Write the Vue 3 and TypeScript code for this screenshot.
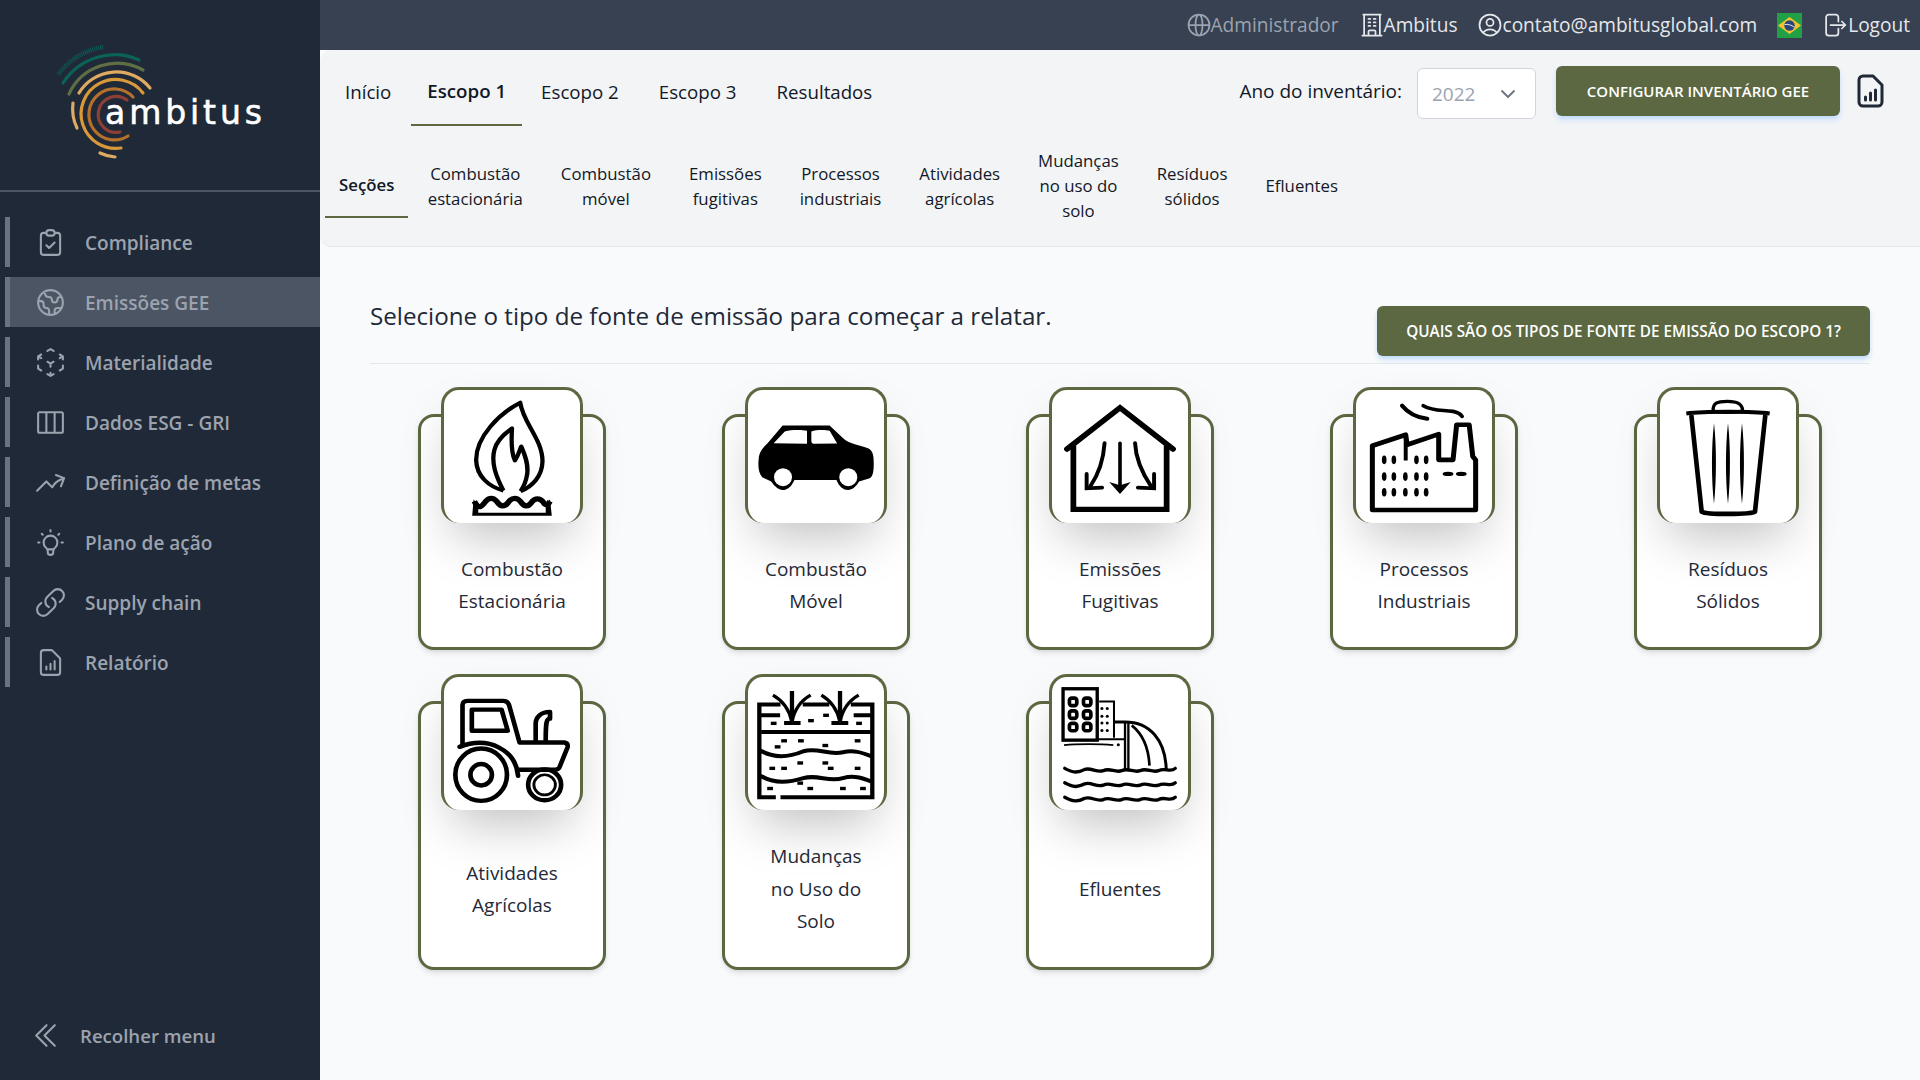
<script setup lang="ts">
interface NavItem { label: string; d: string; active?: boolean }
interface Card { lines: string[]; vb: string; art: string }

const nav: NavItem[] = [
  { label: 'Compliance', d: 'M9 5H7a2 2 0 00-2 2v12a2 2 0 002 2h10a2 2 0 002-2V7a2 2 0 00-2-2h-2M9 5a2 2 0 002 2h2a2 2 0 002-2M9 5a2 2 0 012-2h2a2 2 0 012 2m-6 9l2 2 4-4' },
  { label: 'Emissões GEE', active: true, d: 'M3.055 11H5a2 2 0 012 2v1a2 2 0 002 2 2 2 0 012 2v2.945M8 3.935V5.5A2.5 2.5 0 0010.5 8h.5a2 2 0 012 2 2 2 0 104 0 2 2 0 012-2h1.064M15 20.488V18a2 2 0 012-2h3.064M21 12a9 9 0 11-18 0 9 9 0 0118 0z' },
  { label: 'Materialidade', d: 'M21 7.5l-2.25-1.313M21 7.5v2.25m0-2.25l-2.25 1.313M3 7.5l2.25-1.313M3 7.5l2.25 1.313M3 7.5v2.25m9 3l2.25-1.313M12 12.75l-2.25-1.313M12 12.75V15m0 6.75l2.25-1.313M12 21.75V19.5m0 2.25l-2.25-1.313m0-16.875L12 2.25l2.25 1.313M21 14.25v2.25l-2.25 1.313m-13.5 0L3 16.5v-2.25' },
  { label: 'Dados ESG - GRI', d: 'M9 4.5v15m6-15v15m-10.875 0h15.75c.621 0 1.125-.504 1.125-1.125V5.625c0-.621-.504-1.125-1.125-1.125H4.125C3.504 4.5 3 5.004 3 5.625v12.75c0 .621.504 1.125 1.125 1.125z' },
  { label: 'Definição de metas', d: 'M2.25 18L9 11.25l4.306 4.307a11.95 11.95 0 015.814-5.519l2.74-1.22m0 0l-5.94-2.28m5.94 2.28l-2.28 5.941' },
  { label: 'Plano de ação', d: 'M9.663 17h4.673M12 3v1m6.364 1.636l-.707.707M21 12h-1M4 12H3m3.343-5.657l-.707-.707m2.828 9.9a5 5 0 117.072 0l-.548.547A3.374 3.374 0 0014 18.469V19a2 2 0 11-4 0v-.531c0-.895-.356-1.754-.988-2.386l-.548-.547z' },
  { label: 'Supply chain', d: 'M13.19 8.688a4.5 4.5 0 011.242 7.244l-4.5 4.5a4.5 4.5 0 01-6.364-6.364l1.757-1.757m13.35-.622l1.757-1.757a4.5 4.5 0 00-6.364-6.364l-4.5 4.5a4.5 4.5 0 001.242 7.244' },
  { label: 'Relatório', d: 'M9 17v-2m3 2v-4m3 4v-6m2 10H7a2 2 0 01-2-2V5a2 2 0 012-2h5.586a1 1 0 01.707.293l5.414 5.414a1 1 0 01.293.707V19a2 2 0 01-2 2z' }
]

const tabs: string[] = ['Início', 'Escopo 1', 'Escopo 2', 'Escopo 3', 'Resultados']

const sections: string[][] = [
  ['Seções'],
  ['Combustão', 'estacionária'],
  ['Combustão', 'móvel'],
  ['Emissões', 'fugitivas'],
  ['Processos', 'industriais'],
  ['Atividades', 'agrícolas'],
  ['Mudanças', 'no uso do', 'solo'],
  ['Resíduos', 'sólidos'],
  ['Efluentes']
]

const dots = (list: number[][], rx: number, ry: number): string =>
  list.map(([x, y]) => `<ellipse cx="${x}" cy="${y}" rx="${rx}" ry="${ry}" fill="#000"/>`).join('')

const bricks = (list: number[][]): string =>
  list.map(([x, y]) => `<rect x="${x}" y="${y}" width="16" height="10" fill="#000"/>`).join('')

const cards: Card[] = [
  {
    lines: ['Combustão', 'Estacionária'],
    vb: '124.4 61 379.2 398',
    art: `<g fill="none" stroke="#000" stroke-width="12" stroke-linejoin="round">
      <path d="M290 362C250 350 215 320 214 270C214 200 280 130 337 99C345 160 400 210 399 275C398 320 370 350 338 364"/>
      <path d="M290 362C270 320 255 280 265 240C272 210 295 190 314 176C312 210 312 250 322 272C332 258 335 240 340 230C352 260 362 290 355 320C352 340 345 352 338 364"/>
      <path stroke-width="16" d="M209 394C220 420 230 410 240 395C250 382 262 382 272 395C282 412 295 412 305 395C315 382 328 382 338 395C348 412 360 412 370 395C378 384 392 384 400 395C405 405 412 410 420 394"/></g>
      <path d="M203 437L207 388L220 408V428H408V408L420 388L425 437Z" fill="#000"/>`
  },
  {
    lines: ['Combustão', 'Móvel'],
    vb: '975.4 61 379.2 398',
    art: `<path fill="#000" d="M1005 270C1005 250 1015 235 1030 220L1072 167H1203L1240 205C1255 222 1290 228 1310 235C1325 242 1326 260 1326 280C1326 300 1325 318 1315 325L1285 335C1275 355 1262 360 1255 360C1240 360 1230 350 1222 330H1105C1095 352 1085 360 1072 360C1060 360 1050 350 1040 335L1015 322C1005 310 1003 290 1005 270Z"/>
      <path fill="#fff" d="M1047 220L1078 185C1095 180 1125 180 1140 183V222ZM1152 185C1165 180 1190 180 1203 183L1224 221L1160 222C1152 222 1152 215 1152 210Z"/>
      <ellipse cx="1073" cy="322" rx="25" ry="27" fill="#fff"/><ellipse cx="1255" cy="322" rx="25" ry="27" fill="#fff"/>`
  },
  {
    lines: ['Emissões', 'Fugitivas'],
    vb: '118.4 61 379.2 398',
    art: `<g fill="none" stroke="#000" stroke-linecap="round">
      <path d="M160 238L308 114L456 238" stroke-width="16"/>
      <path d="M178 228V418H438V228" stroke-width="16" stroke-linecap="butt"/>
      <path d="M308 220V350" stroke-width="10"/>
      <path d="M265 220C262 270 250 310 225 350" stroke-width="11"/>
      <path d="M350 220C352 270 370 310 395 350" stroke-width="11"/>
      <path d="M215 312V355L258 353" stroke-width="11"/>
      <path d="M403 312V355L358 353" stroke-width="11"/></g>
      <path d="M278 336L308 346L338 336L308 372Z" fill="#000"/>`
  },
  {
    lines: ['Processos', 'Industriais'],
    vb: '969.4 61 379.2 398',
    art: `<g fill="none" stroke="#000" stroke-linejoin="round">
      <path d="M1015 420V228L1108 195L1112 225L1200 193V270H1240L1250 165H1285L1295 260L1303 270V420Z" stroke-width="14"/>
      <path d="M1108 200V272" stroke-width="11"/>
      <path d="M1098 108C1115 130 1135 143 1168 147" stroke-width="12" stroke-linecap="round"/>
      <path d="M1157 108C1185 125 1210 120 1240 125C1255 128 1262 135 1265 140" stroke-width="11" stroke-linecap="round"/></g>` +
      dots([[1048, 270], [1075, 270], [1138, 270], [1165, 270], [1048, 320], [1075, 320], [1107, 320], [1138, 320], [1165, 320], [1048, 367], [1075, 367], [1107, 367], [1138, 367], [1165, 367]], 6.5, 13) +
      dots([[1226, 312], [1263, 312]], 15, 6)
  },
  {
    lines: ['Resíduos', 'Sólidos'],
    vb: '120 61 408 398',
    art: `<g fill="none" stroke="#000" stroke-linejoin="round">
      <path d="M199 131C250 124 400 124 449 131" stroke-width="12"/>
      <path d="M279 124C279 100 290 95 322 95C352 95 368 102 368 124C340 128 300 128 279 124Z" stroke-width="10"/>
      <path d="M214 136L245 425C260 434 392 434 405 425L436 136" stroke-width="14"/></g>
      <path fill="#000" d="M282 160C290 230 290 330 282 402C274 330 274 230 282 160ZM324 160C332 230 332 330 324 402C316 330 316 230 324 160ZM366 160C374 230 374 330 366 402C358 330 358 230 366 160Z"/>`
  },
  {
    lines: ['Atividades', 'Agrícolas'],
    vb: '124.4 51 379.2 396',
    art: `<g fill="none" stroke="#000" stroke-width="13" stroke-linecap="round" stroke-linejoin="round">
      <path d="M176 250V135Q176 122 190 122H290Q302 122 306 135L335 246H460Q471 248 469 260L447 318Q445 327 430 327H330"/>
      <path d="M202 148H285L302 211H202Z"/>
      <path d="M168 259C250 225 325 270 331 345"/>
      <ellipse cx="228" cy="342" rx="72" ry="78"/>
      <ellipse cx="228" cy="342" rx="30" ry="32"/>
      <path d="M380 240V190C380 170 395 155 420 155V175C410 175 408 185 408 240"/>
      <ellipse cx="405" cy="372" rx="46" ry="46"/>
      <ellipse cx="405" cy="372" rx="30" ry="30" stroke-width="8"/></g>`
  },
  {
    lines: ['Mudanças', 'no Uso do', 'Solo'],
    vb: '975.4 51 379.2 396',
    art: `<g fill="none" stroke="#000" stroke-width="12">
      <path d="M1066 133H1007V409H1053M1066 409H1322V133H1262M1128 133H1202"/>
      <path d="M1007 165H1065M1270 165H1322M1012 215H1322"/>
      <path d="M1010 270C1050 295 1090 290 1130 272C1170 260 1200 285 1240 275C1270 268 1290 275 1322 288"/>
      <path d="M1010 345C1050 370 1090 365 1130 352C1170 340 1200 365 1240 352C1270 343 1290 350 1322 363"/>
      <path d="M1098 93V190M1076 188H1122M1232 93V190M1208 188H1255" />
      <path d="M1098 185C1090 145 1070 120 1045 105M1098 185C1105 145 1125 120 1150 105M1232 185C1224 145 1204 120 1180 105M1232 185C1239 145 1259 120 1284 105" stroke-width="9"/></g>` +
      bricks([[1039, 184], [1143, 176], [1185, 160], [1277, 184], [1068, 236], [1050, 254], [1115, 236], [1183, 250], [1273, 236], [1035, 318], [1068, 318], [1113, 302], [1183, 302], [1198, 318], [1273, 318], [1113, 362], [1141, 378], [1029, 378], [1232, 378], [1288, 378]])
  },
  {
    lines: ['Efluentes'],
    vb: '127 51 406 396',
    art: `<g fill="none" stroke="#000">
      <rect x="160" y="86" width="102" height="153" stroke-width="10" fill="#fff"/>
      <g stroke-width="11"><rect x="179" y="114" width="22" height="22" rx="7"/><rect x="221" y="114" width="22" height="22" rx="7"/><rect x="179" y="152" width="22" height="22" rx="7"/><rect x="221" y="152" width="22" height="22" rx="7"/><rect x="179" y="189" width="22" height="22" rx="7"/><rect x="221" y="189" width="22" height="22" rx="7"/></g>
      <path d="M268 124H312V232M266 236H345" stroke-width="6"/>
      <path d="M312 185H345C420 185 465 240 468 325" stroke-width="9"/>
      <path d="M345 187V325M355 187V325" stroke-width="7"/>
      <path d="M365 195C390 215 415 250 418 315" stroke-width="8"/>
      <path d="M163 254C200 250 270 250 310 254" stroke-width="5"/>
      <g stroke-width="10" stroke-linecap="round"><path d="M165 323C190 337 205 337 225 326C245 320 260 337 280 330C300 320 315 337 335 330C355 320 370 337 390 330C410 320 425 337 445 330C465 320 480 337 495 323"/>
      <path d="M165 366C190 380 205 380 225 369C245 363 260 380 280 373C300 363 315 380 335 373C355 363 370 380 390 373C410 363 425 380 445 373C465 363 480 380 495 366"/>
      <path d="M165 409C190 423 205 423 225 412C245 406 260 423 280 416C300 406 315 423 335 416C355 406 370 423 390 416C410 406 425 423 445 416C465 406 480 423 495 409"/></g></g>` +
      dots([[276, 145], [292, 145], [276, 168], [292, 168], [276, 188], [292, 188], [276, 210], [292, 210], [325, 253]], 4.5, 4.5)
  }
]
</script>

<template>
  <div class="app">
    <aside class="sidebar">
      <div class="brand">
        <svg class="logo" viewBox="0 0 320 190" fill="none" stroke-linecap="round" stroke-width="3.2">
          <path d="M103 47A69 69 0 0 0 58 75" stroke="#0d5e5a" stroke-width="4.5" stroke-dasharray="1 1" stroke-linecap="butt" />
          <path d="M139 60A61 61 0 0 0 63 83" stroke="#0b6355" />
          <path d="M143 70A53 53 0 0 0 69 94" stroke="#5f6e45" />
          <path d="M150 88A43.5 43.5 0 0 0 79 93" stroke="#dfab62" />
          <path d="M73 103A44 44 0 0 0 77 128" stroke="#dfab62" />
          <path d="M100 153A42 42 0 0 0 115 157" stroke="#dfab62" />
          <path d="M143 93A34.5 34.5 0 1 0 121 148" stroke="#d9983a" />
          <path d="M133 97A25.5 25.5 0 1 0 128 136" stroke="#b5702c" />
          <path d="M127 100A18 18 0 1 0 120 132" stroke="#8b3f35" />
          <text x="105" y="124" textLength="157" lengthAdjust="spacing" class="logo-text">ambitus</text>
        </svg>
      </div>
      <nav class="nav">
        <a v-for="item in nav" :key="item.label" class="nav-item" :class="{ active: item.active }">
          <svg class="nav-icon" viewBox="0 0 24 24" fill="none" stroke="currentColor" stroke-width="1.5" stroke-linecap="round" stroke-linejoin="round">
            <path :d="item.d" />
          </svg>
          <span>{{ item.label }}</span>
        </a>
      </nav>
      <div class="collapse">
        <svg class="collapse-icon" viewBox="0 0 24 24" fill="none" stroke="currentColor" stroke-width="1.5" stroke-linecap="round" stroke-linejoin="round">
          <path d="M18.75 19.5l-7.5-7.5 7.5-7.5m-6 15L5.25 12l7.5-7.5" />
        </svg>
        <span>Recolher menu</span>
      </div>
    </aside>

    <div class="main">
      <header class="topbar">
        <span class="top-item muted">
          <svg class="top-icon" viewBox="0 0 24 24" fill="none" stroke="currentColor" stroke-width="1.5" stroke-linecap="round" stroke-linejoin="round"><path d="M21 12a9 9 0 01-9 9m9-9a9 9 0 00-9-9m9 9H3m9 9a9 9 0 01-9-9m9 9c1.657 0 3-4.03 3-9s-1.343-9-3-9m0 18c-1.657 0-3-4.03-3-9s1.343-9 3-9m-9 9a9 9 0 019-9" /></svg>
          Administrador
        </span>
        <span class="top-item">
          <svg class="top-icon" viewBox="0 0 24 24" fill="none" stroke="currentColor" stroke-width="1.5" stroke-linecap="round" stroke-linejoin="round"><path d="M3.75 21h16.5M4.5 3h15M5.25 3v18m13.5-18v18M9 6.75h1.5m-1.5 3h1.5m-1.5 3h1.5m3-6H15m-1.5 3H15m-1.5 3H15M9 21v-3.375c0-.621.504-1.125 1.125-1.125h3.75c.621 0 1.125.504 1.125 1.125V21" /></svg>
          Ambitus
        </span>
        <span class="top-item">
          <svg class="top-icon" viewBox="0 0 24 24" fill="none" stroke="currentColor" stroke-width="1.5" stroke-linecap="round" stroke-linejoin="round"><path d="M17.982 18.725A7.488 7.488 0 0012 15.75a7.488 7.488 0 00-5.982 2.975m11.963 0a9 9 0 10-11.963 0m11.963 0A8.966 8.966 0 0112 21a8.966 8.966 0 01-5.982-2.275M15 9.75a3 3 0 11-6 0 3 3 0 016 0z" /></svg>
          contato@ambitusglobal.com
        </span>
        <svg class="flag" viewBox="0 0 25 25">
          <rect width="25" height="25" fill="#22a045" />
          <path d="M12.5 4L24 12.5 12.5 21 1 12.5Z" fill="#f2c230" />
          <circle cx="12.5" cy="12.5" r="5.2" fill="#27467f" />
          <path d="M7.6 11.5c3.5-.6 7 .6 9.6 2.7" stroke="#e8e8e8" stroke-width="1" fill="none" />
        </svg>
        <span class="top-item logout">
          <svg class="top-icon" viewBox="0 0 24 24" fill="none" stroke="currentColor" stroke-width="1.5" stroke-linecap="round" stroke-linejoin="round"><path d="M15.75 9V5.25A2.25 2.25 0 0013.5 3h-6a2.25 2.25 0 00-2.25 2.25v13.5A2.25 2.25 0 007.5 21h6a2.25 2.25 0 002.25-2.25V15m3 0l3-3m0 0l-3-3m3 3H9" /></svg>
          Logout
        </span>
      </header>

      <section class="subhead">
        <div class="row-one">
          <div class="tabs">
            <a v-for="(t, i) in tabs" :key="t" class="tab" :class="{ on: i === 1 }">{{ t }}</a>
          </div>
          <div class="inventory">
            <span class="inv-label">Ano do inventário:</span>
            <div class="select">
              <span>2022</span>
              <svg class="chev" viewBox="0 0 20 20" fill="none" stroke="currentColor" stroke-width="1.5" stroke-linecap="round" stroke-linejoin="round"><path d="M5 7.5l5 5 5-5" /></svg>
            </div>
            <button class="btn btn-config" type="button">CONFIGURAR INVENTÁRIO GEE</button>
            <svg class="doc-icon" viewBox="0 0 27 34" fill="none" stroke="#1f2937" stroke-width="3" stroke-linecap="round" stroke-linejoin="round">
              <path d="M6 2h10l9 9v17a4 4 0 01-4 4H6a4 4 0 01-4-4V6a4 4 0 014-4z" />
              <path d="M8.5 26v-3M13.5 26v-7M18.5 26v-10" />
            </svg>
          </div>
        </div>
        <div class="row-two">
          <a v-for="(s, i) in sections" :key="i" class="sec" :class="{ on: i === 0 }">
            <span v-for="l in s" :key="l">{{ l }}</span>
          </a>
        </div>
      </section>

      <main class="content">
        <div class="heading">
          <h1>Selecione o tipo de fonte de emissão para começar a relatar.</h1>
          <button class="btn btn-types" type="button">QUAIS SÃO OS TIPOS DE FONTE DE EMISSÃO DO ESCOPO 1?</button>
        </div>
        <div class="grid">
          <div v-for="c in cards" :key="c.lines.join()" class="card">
            <div class="pic">
              <svg class="art" :viewBox="c.vb" preserveAspectRatio="none" v-html="c.art"></svg>
            </div>
            <div class="caption">
              <span v-for="l in c.lines" :key="l">{{ l }}</span>
            </div>
          </div>
        </div>
      </main>
    </div>
  </div>
</template>

<style>
html, body { margin: 0; padding: 0; background: #f9fafb; }
</style>

<style scoped>
.app {
  display: flex;
  width: 1920px;
  height: 1080px;
  overflow: hidden;
  font-family: "Open Sans", "Noto Sans", sans-serif;
  color: #111827;
}
.sidebar {
  width: 320px;
  flex: none;
  background: #1f2937;
  display: flex;
  flex-direction: column;
  color: #9ca3af;
}
.brand { height: 190px; border-bottom: 2px solid #4b5563; }
.logo { display: block; width: 320px; height: 190px; }
.logo-text { font-family: "DejaVu Sans", sans-serif; font-size: 33px; font-weight: 400; fill: #fff; stroke: #fff; stroke-width: 0.6; }
.nav { display: flex; flex-direction: column; gap: 10px; margin-top: 25px; }
.nav-item {
  height: 50px;
  box-sizing: border-box;
  padding-top: 1px;
  margin-left: 5px;
  border-left: 5px solid #6b7280;
  display: flex;
  align-items: center;
  font-size: 19px;
  font-weight: 600;
}
.nav-item.active { background: #4b5563; }
.nav-icon { width: 33px; height: 33px; margin-left: 23.5px; margin-right: 18.5px; flex: none; }
.collapse {
  margin-top: auto;
  height: 90px;
  display: flex;
  align-items: center;
  font-size: 18.6px;
  font-weight: 600;
}
.collapse-icon { width: 33px; height: 33px; margin-left: 28.5px; margin-right: 18.5px; flex: none; }

.main { flex: 1; display: flex; flex-direction: column; min-width: 0; }
.topbar {
  height: 50px;
  flex: none;
  background: #374151;
  color: #e5e7eb;
  display: flex;
  align-items: center;
  justify-content: flex-end;
  padding-right: 10px;
  gap: 19px;
  font-size: 19.1px;
}
.top-item { display: inline-flex; align-items: center; gap: 0; }
.top-item.muted { color: #9ca3af; }
.top-icon { width: 28px; height: 28px; flex: none; margin-right: -2px; }
.logout .top-icon { margin-right: 0; }
.flag { width: 25px; height: 25px; flex: none; margin-left: 1px; margin-right: -1px; }

.subhead {
  height: 197px;
  flex: none;
  box-sizing: border-box;
  background: #f3f4f6;
  border-bottom: 1px solid #e5e7eb;
  border-radius: 12px 0 0 12px;
  display: flex;
  flex-direction: column;
}
.row-one { height: 76px; display: flex; justify-content: space-between; align-items: flex-start; flex: none; }
.tabs { display: flex; margin-left: 9px; gap: 4px; }
.tab {
  height: 76px;
  box-sizing: border-box;
  padding: 8px 16px 0;
  display: flex;
  align-items: center;
  font-size: 18.7px;
  border-bottom: 2px solid transparent;
}
.tab:nth-child(3) { margin-left: -1px; }
.tab:nth-child(4) { margin-left: 4px; }
.tab:nth-child(5) { margin-left: 4px; }
.tab.on { font-weight: 600; border-bottom: 2px solid #5b6841; padding-top: 7px; }
.inventory { display: flex; align-items: center; margin-right: 36px; margin-top: 13px; }
.inv-label { font-size: 19px; margin-right: 15px; }
.select {
  width: 119px;
  height: 51px;
  box-sizing: border-box;
  background: #fff;
  border: 1px solid #d1d5db;
  border-radius: 6px;
  display: flex;
  align-items: center;
  justify-content: space-between;
  padding: 0 15px 0 14px;
  color: #9ca3af;
  font-size: 19px;
  margin-top: 5px;
}
.chev { width: 24px; height: 24px; color: #6b7280; }
.btn {
  background: #5b6841;
  color: #fff;
  border: 0;
  border-radius: 6px;
  font-family: inherit;
  font-size: 15px;
  font-weight: 600;
  box-shadow: 0 4px 6px -1px #bfdbfe, 0 2px 4px -2px #bfdbfe;
}
.btn-config { width: 284px; height: 50px; margin-left: 20px; }
.btn-types { font-size: 15.3px; }
.doc-icon { width: 27px; height: 34px; margin-left: 17px; flex: none; }

.row-two { display: flex; margin-left: 5px; align-items: stretch; margin-top: 15px; height: 77px; }
.sec {
  box-sizing: border-box;
  padding: 14px 19px 0;
  display: flex;
  flex-direction: column;
  justify-content: center;
  align-items: center;
  font-size: 16.8px;
  line-height: 25px;
  border-bottom: 2px solid transparent;
  white-space: nowrap;
}
.sec span { display: block; }
.sec.on { font-weight: 600; border-bottom-color: #5b6841; padding: 11px 14px 0; margin-right: 0.4px; }

.content { flex: 1; padding: 51px 50px 0; background: #f9fafb; }
.heading {
  display: flex;
  justify-content: space-between;
  align-items: flex-start;
  height: 65px;
  border-bottom: 1px solid #e5e7eb;
}
h1 { margin: 0; font-size: 24.2px; line-height: 36px; font-weight: 500; color: #1f2937; }
.btn-types { width: 493px; height: 50px; margin-top: 8px; }
.grid {
  display: grid;
  grid-template-columns: repeat(5, 304px);
  row-gap: 24px;
  margin: 23px -10px 0;
}
.card {
  width: 188px;
  justify-self: center;
  box-sizing: border-box;
  margin-top: 27px;
  border: 3px solid #5b6841;
  border-radius: 16px;
  background: #fff;
  box-shadow: 0 4px 6px -1px rgba(0, 0, 0, .1), 0 2px 4px -2px rgba(0, 0, 0, .1);
  display: flex;
  flex-direction: column;
  align-items: center;
}
.pic {
  width: 142px;
  height: 136px;
  box-sizing: border-box;
  margin-top: -30px;
  background: #fff;
  border: 3px solid #5b6841;
  border-bottom: 0;
  border-radius: 18px;
  box-shadow: 0 25px 50px -12px rgba(0, 0, 0, .25);
  flex: none;
  overflow: hidden;
}
.art { display: block; width: 100%; height: 100%; }
.caption {
  flex: 1;
  padding: 30px 0;
  display: flex;
  flex-direction: column;
  align-items: center;
  justify-content: center;
  font-size: 19px;
  font-weight: 500;
  line-height: 32.2px;
  color: #1f2937;
}
.caption span { display: block; }
</style>
